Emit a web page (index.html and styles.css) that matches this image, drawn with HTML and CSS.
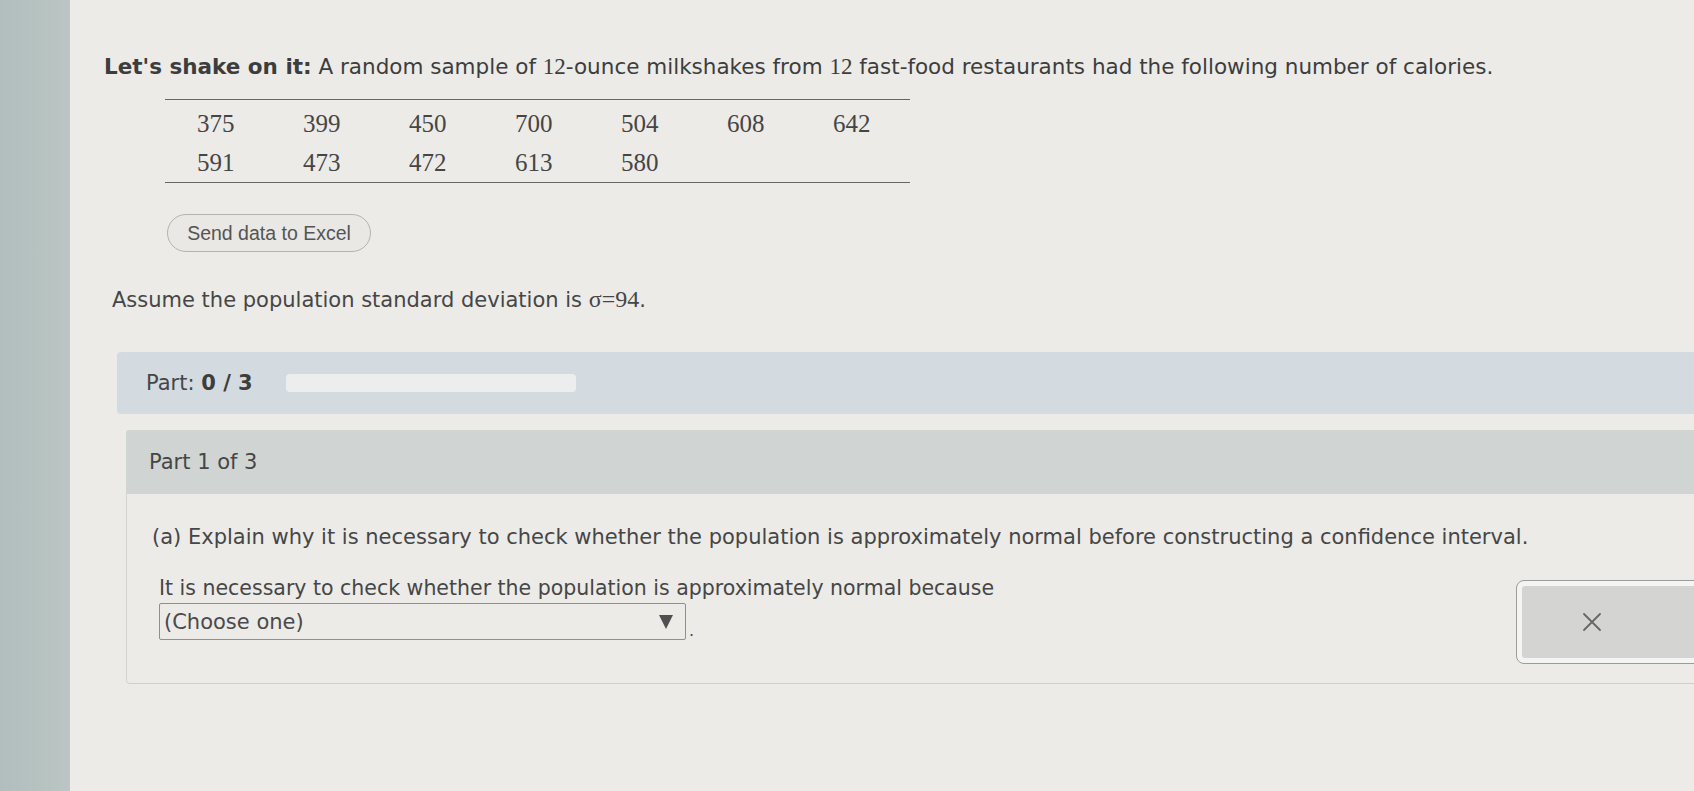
FILE: index.html
```html
<!DOCTYPE html>
<html lang="en">
<head>
<meta charset="utf-8">
<title>Let's shake on it</title>
<link rel="stylesheet" href="styles.css">
</head>
<body>
<div class="page">
  <aside class="sidebar"></aside>
  <main class="main">
    <p class="intro"><b>Let's shake on it:</b> A random sample of <span class="num">12</span>-ounce milkshakes from <span class="num">12</span> fast-food restaurants had the following number of calories.</p>

    <div class="data-table">
      <div class="data-row">
        <span class="cell">375</span><span class="cell">399</span><span class="cell">450</span><span class="cell">700</span><span class="cell">504</span><span class="cell">608</span><span class="cell">642</span>
      </div>
      <div class="data-row">
        <span class="cell">591</span><span class="cell">473</span><span class="cell">472</span><span class="cell">613</span><span class="cell">580</span>
      </div>
    </div>

    <button class="excel-btn" type="button">Send data to Excel</button>

    <p class="assume">Assume the population standard deviation is <span class="num">σ=94</span>.</p>

    <div class="part-bar">
      <span class="part-label">Part: <b>0 / 3</b></span>
      <div class="progress-track"></div>
    </div>

    <section class="part-section">
      <header class="part-header">Part 1 of 3</header>
      <div class="part-body">
        <p class="question">(a) Explain why it is necessary to check whether the population is approximately normal before constructing a confidence interval.</p>
        <div class="answer-row">
          <div class="answer-left">
            <p class="prompt">It is necessary to check whether the population is approximately normal because</p>
            <div class="select-line">
              <div class="select-box">
                <span>(Choose one)</span>
                <span class="caret"></span>
              </div>
              <span class="dot">.</span>
            </div>
          </div>
          <div class="tool-box">
            <div class="tool-inner">
              <svg class="x-icon" width="20" height="20" viewBox="0 0 20 20" aria-hidden="true">
                <path d="M2 2 L18 18 M18 2 L2 18" stroke="#666" stroke-width="1.8" fill="none" stroke-linecap="round"/>
              </svg>
            </div>
          </div>
        </div>
      </div>
    </section>
  </main>
</div>
</body>
</html>
```

FILE: styles.css
```css
html, body {
  margin: 0;
  padding: 0;
  height: 791px;
  overflow: hidden;
  background: #ecebe8;
}

.page {
  display: flex;
  height: 791px;
  font-family: "DejaVu Sans", Verdana, sans-serif;
  color: #464646;
}

.sidebar {
  width: 70px;
  flex: 0 0 70px;
  background: linear-gradient(90deg, #b2bebd 0%, #bac5c4 100%);
}

.main {
  flex: 0 0 1700px;
  padding: 55px 0 0 34px;
  box-sizing: border-box;
}

.intro {
  margin: 0;
  font-size: 21.5px;
  line-height: 24px;
  color: #3d3d3d;
  white-space: nowrap;
}

.intro b {
  font-weight: bold;
}

.num {
  font-family: "Liberation Serif", "Times New Roman", serif;
  font-size: 23px;
}

.data-table {
  margin: 20px 0 0 61px;
  width: 745px;
  border-top: 1.5px solid #666;
  border-bottom: 1.5px solid #666;
  padding: 4px 0 0 32px;
  box-sizing: border-box;
  font-family: "Liberation Serif", "Times New Roman", serif;
  font-size: 25px;
  color: #454545;
}

.data-row {
  display: flex;
  height: 39px;
  align-items: center;
}

.cell {
  width: 106px;
  flex: 0 0 106px;
}

.excel-btn {
  display: block;
  margin: 31px 0 0 63px;
  width: 204px;
  height: 38px;
  border: 1.5px solid #b3b3b1;
  border-radius: 19px;
  background: #e9e8e5;
  font-family: "Liberation Sans", Arial, sans-serif;
  font-size: 19.5px;
  color: #555;
  padding: 0;
}

.assume {
  margin: 35px 0 0 8px;
  font-size: 21px;
  line-height: 24px;
}

.assume .num {
  font-size: 24px;
}

.part-bar {
  margin: 40px 0 0 13px;
  height: 62px;
  background: #d3dbe1;
  border-radius: 4px 0 0 4px;
  display: flex;
  align-items: center;
  padding-left: 29px;
  gap: 33px;
}

.part-label {
  font-size: 21px;
}

.part-label b {
  font-weight: bold;
  color: #3d3d3d;
}

.progress-track {
  width: 290px;
  height: 18px;
  background: #eceeee;
  border-radius: 4px;
}

.part-section {
  margin: 16px 0 0 22px;
}

.part-header {
  height: 64px;
  background: #d0d5d3;
  border-radius: 3px 0 0 0;
  padding-left: 23px;
  display: flex;
  align-items: center;
  font-size: 21px;
}

.part-body {
  border-left: 1px solid #d3d3d1;
  border-bottom: 1.5px solid #cfcfcd;
  border-radius: 0 0 0 4px;
  padding: 31px 0 19px 25px;
  background: #ecebe8;
}

.question {
  margin: 0;
  font-size: 21px;
  line-height: 24px;
  white-space: nowrap;
}

.answer-row {
  display: flex;
  align-items: flex-start;
  margin-top: 27px;
}

.answer-left {
  width: 1364px;
  flex: 0 0 1364px;
  padding-left: 7px;
  box-sizing: border-box;
}

.prompt {
  margin: 0;
  font-size: 20.5px;
  line-height: 24px;
}

.select-line {
  display: flex;
  align-items: flex-end;
  margin-top: 3px;
}

.select-box {
  width: 527px;
  height: 37px;
  box-sizing: border-box;
  border: 1.5px solid #8f8f8d;
  border-radius: 2px;
  background: #ecebe8;
  display: flex;
  align-items: center;
  justify-content: space-between;
  padding: 0 12px 0 4px;
  font-size: 21px;
  color: #4a4a4a;
}

.caret {
  width: 0;
  height: 0;
  border-left: 7px solid transparent;
  border-right: 7px solid transparent;
  border-top: 14px solid #505050;
}

.dot {
  font-size: 16px;
  margin-left: 3px;
  line-height: 18px;
}

.tool-box {
  margin-top: 4px;
  width: 240px;
  height: 84px;
  box-sizing: border-box;
  border: 1.5px solid #9c9c9a;
  border-radius: 8px;
  background: #f4f4f2;
  padding: 5px;
}

.tool-inner {
  height: 100%;
  background: #d4d4d2;
  border-radius: 3px;
  display: flex;
  align-items: center;
  padding-left: 60px;
}
```
